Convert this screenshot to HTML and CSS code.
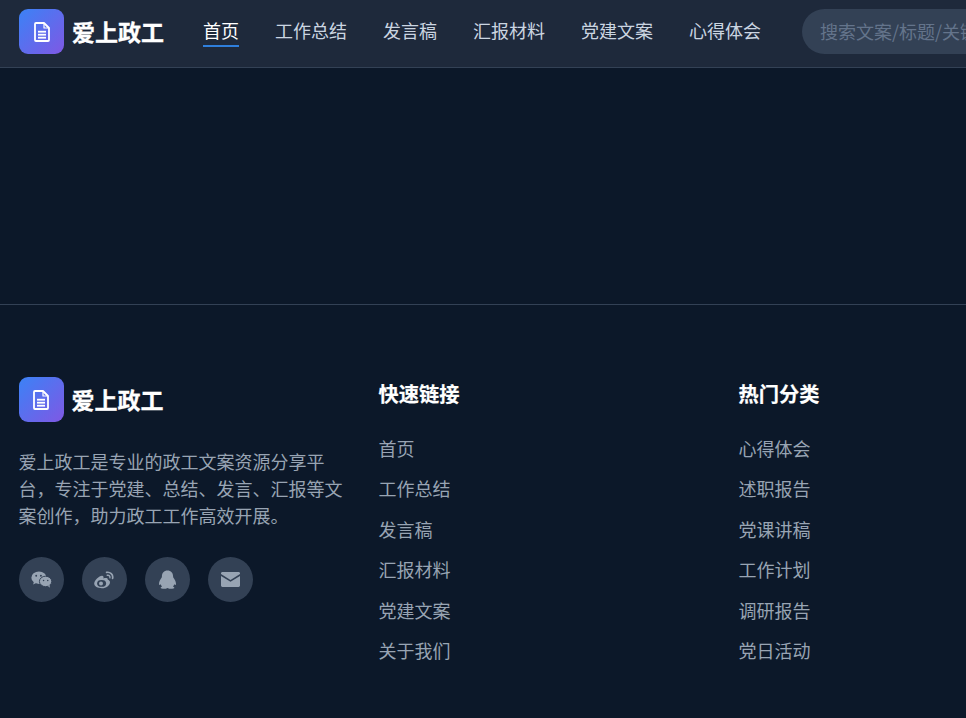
FILE: index.html
```html
<!DOCTYPE html>
<html lang="zh-CN">
<head>
    <meta charset="UTF-8">
    <meta name="viewport" content="width=device-width, initial-scale=1.0">
    <title>爱上政工</title>
    <link rel="stylesheet" href="styles.css">
</head>
<body>
    <header class="site-header">
        <a class="logo" href="#">
            <span class="logo-mark">
                <svg class="logo-icon" viewBox="0 0 16 20" fill="none" stroke="currentColor" stroke-width="1.800" stroke-linejoin="round">
                    <path d="M1 2a1 1 0 0 1 1-1h8l5 5v12a1 1 0 0 1-1 1H2a1 1 0 0 1-1-1z"></path>
                    <path d="M10 1.500V6h4.500" stroke-width="1.200"></path>
                    <line x1="4" y1="9.700" x2="12" y2="9.700"></line>
                    <line x1="4" y1="12.700" x2="12" y2="12.700"></line>
                    <line x1="4" y1="15.700" x2="12" y2="15.700"></line>
                </svg>
            </span>
            <span class="logo-text">爱上政工</span>
        </a>
        <nav class="main-nav">
            <a class="active" href="#">首页</a>
            <a href="#">工作总结</a>
            <a href="#">发言稿</a>
            <a href="#">汇报材料</a>
            <a href="#">党建文案</a>
            <a href="#">心得体会</a>
        </nav>
        <input class="search" type="text" placeholder="搜索文案/标题/关键词...">
    </header>

    <main class="content"></main>

    <footer class="site-footer">
        <div class="footer-grid">
            <div class="footer-about">
                <a class="logo" href="#">
                    <span class="logo-mark">
                        <svg class="logo-icon" viewBox="0 0 16 20" fill="none" stroke="currentColor" stroke-width="1.800" stroke-linejoin="round">
                            <path d="M1 2a1 1 0 0 1 1-1h8l5 5v12a1 1 0 0 1-1 1H2a1 1 0 0 1-1-1z"></path>
                            <path d="M10 1.500V6h4.500" stroke-width="1.200"></path>
                            <line x1="4" y1="9.700" x2="12" y2="9.700"></line>
                            <line x1="4" y1="12.700" x2="12" y2="12.700"></line>
                            <line x1="4" y1="15.700" x2="12" y2="15.700"></line>
                        </svg>
                    </span>
                    <span class="logo-text">爱上政工</span>
                </a>
                <p class="about-text">爱上政工是专业的政工文案资源分享平台，专注于党建、总结、发言、汇报等文案创作，助力政工工作高效开展。</p>
                <div class="socials">
                    <a class="social" href="#" aria-label="微信">
                        <svg width="21" height="18" viewBox="0 0 22 19" fill="currentColor">
                            <ellipse cx="8.300" cy="7" rx="8" ry="6.600"></ellipse>
                            <path d="M3 11l-.8 3.300 3.800-2z"></path>
                            <ellipse cx="15.300" cy="11" rx="6.500" ry="5.500" stroke="#334155" stroke-width="1"></ellipse>
                            <path d="M17.500 15.500l2.300 2.300-.3-3.300z"></path>
                            <g fill="#334155">
                                <circle cx="5.400" cy="5" r="1"></circle>
                                <circle cx="10.400" cy="5" r="1"></circle>
                                <circle cx="13.200" cy="10" r=".8"></circle>
                                <circle cx="17.600" cy="10" r=".8"></circle>
                            </g>
                        </svg>
                    </a>
                    <a class="social" href="#" aria-label="微博">
                        <svg width="20" height="18" viewBox="0 0 20 18" fill="none" stroke="currentColor">
                            <path d="M8 17.300c-4.300 0-7.800-1.900-7.800-4.700 0-3.200 4.900-7.900 7.800-7.900 1.700 0 1.800 1.500 1.400 2.800 2.100-.7 4.500-.7 4.500 1.200 1 .3 2.100 1.200 2.100 2.500 0 3.200-3.900 6.100-7.900 6.100z" fill="currentColor" stroke="none"></path>
                            <ellipse cx="7.600" cy="12.400" rx="4.500" ry="3.400" fill="#334155" stroke="none"></ellipse>
                            <circle cx="7" cy="12.600" r="2" fill="currentColor" stroke="none"></circle>
                            <path d="M12.600 1.400c3.500-.8 6.800 2.300 6 5.900" stroke-width="1.700" stroke-linecap="round"></path>
                            <path d="M13.300 4.300c1.700-.4 3 1 2.600 2.600" stroke-width="1.400" stroke-linecap="round"></path>
                        </svg>
                    </a>
                    <a class="social" href="#" aria-label="QQ">
                        <svg width="19" height="19" viewBox="0 0 18 19" fill="currentColor">
                            <path d="M9 .5c3.500 0 5.600 2.600 5.600 5.800 0 .6 0 1 .2 1.300 1 1.400 2.700 3.900 2.700 6.200 0 1.500-.8 1.500-1.800.4-.2.9-.6 1.600-1.200 2.200.9.400 1.400.9 1.400 1.300 0 .7-1.800 1.100-3.300 1.100-1.300 0-2.500-.3-3.600-.9-1.100.6-2.300.9-3.600.9-1.500 0-3.300-.4-3.300-1.100 0-.4.5-.9 1.400-1.300-.6-.6-1-1.300-1.200-2.200-1 1.100-1.800 1.100-1.800-.4 0-2.300 1.700-4.800 2.700-6.200.2-.3.2-.7.2-1.300C3.400 3.100 5.500.5 9 .5z"></path>
                        </svg>
                    </a>
                    <a class="social" href="#" aria-label="邮箱">
                        <svg width="19" height="15" viewBox="0 0 18 14" fill="currentColor">
                            <path d="M1.300 0h15.400C17.400 0 18 .6 18 1.300v.6L9 7.400 0 1.900v-.6C0 .6.600 0 1.300 0z"></path>
                            <path d="M0 3.700l9 5.500 9-5.500v9C18 13.400 17.400 14 16.700 14H1.300C.6 14 0 13.400 0 12.700z"></path>
                        </svg>
                    </a>
                </div>
            </div>
            <div class="footer-col">
                <h3>快速链接</h3>
                <ul>
                    <li><a href="#">首页</a></li>
                    <li><a href="#">工作总结</a></li>
                    <li><a href="#">发言稿</a></li>
                    <li><a href="#">汇报材料</a></li>
                    <li><a href="#">党建文案</a></li>
                    <li><a href="#">关于我们</a></li>
                </ul>
            </div>
            <div class="footer-col">
                <h3>热门分类</h3>
                <ul>
                    <li><a href="#">心得体会</a></li>
                    <li><a href="#">述职报告</a></li>
                    <li><a href="#">党课讲稿</a></li>
                    <li><a href="#">工作计划</a></li>
                    <li><a href="#">调研报告</a></li>
                    <li><a href="#">党日活动</a></li>
                </ul>
            </div>
        </div>
    </footer>
</body>
</html>
```

FILE: styles.css
```css
:root {
    --page-bg: #0c1829;
    --header-bg: #1e293b;
    --line-color: #334155;
    --muted: #98a4b3;
    --nav-text: #cbd5e1;
    --accent: #2f7fdc;
}
html, body {
    height: 100%;
    overflow: hidden;
}
body {
    margin: 0;
    width: 1440px;
    font-family: "Noto Sans CJK SC", "Noto Sans", sans-serif;
    background-color: var(--page-bg);
    color: #fff;
}
a {
    color: inherit;
    text-decoration: none;
}

.site-header {
    display: flex;
    align-items: flex-start;
    height: 58px;
    padding: 9px 19px 0;
    background-color: var(--header-bg);
    border-bottom: 1px solid var(--line-color);
}
.logo {
    display: flex;
    align-items: center;
    gap: 8px;
}
.logo-mark {
    display: flex;
    align-items: center;
    justify-content: center;
    width: 45px;
    height: 45px;
    border-radius: 9px;
    background: linear-gradient(135deg, #3b82f6, #7f58e4);
}
.logo-icon {
    width: 16px;
    height: 20px;
}
.logo-text {
    font-size: 23px;
    font-weight: 700;
    line-height: 1.500;
    -webkit-text-stroke: 0.3px #fff;
}
.main-nav {
    display: flex;
    gap: 36px;
    margin-left: 39px;
}
.main-nav a {
    padding: 9px 0 2px;
    font-size: 18px;
    line-height: 25px;
    color: var(--nav-text);
    border-bottom: 2px solid transparent;
}
.main-nav a.active {
    color: #fff;
    border-bottom-color: var(--accent);
}
.search {
    width: 360px;
    height: 45px;
    box-sizing: border-box;
    margin-left: 41px;
    padding: 0 18px 2px;
    border: none;
    border-radius: 22.500px;
    background-color: var(--line-color);
    font-family: inherit;
    font-size: 18px;
    color: #fff;
}
.search::placeholder {
    color: #64748b;
}

.content {
    height: 236px;
}

.site-footer {
    padding: 72px 18.500px 0;
    border-top: 1px solid var(--line-color);
}
.footer-grid {
    display: grid;
    grid-template-columns: repeat(3, 328px);
    gap: 32px;
}
.about-text {
    margin: 26px 0 0;
    font-size: 18px;
    line-height: 27px;
    color: var(--muted);
}
.socials {
    display: flex;
    gap: 18px;
    margin-top: 28px;
}
.social {
    display: flex;
    align-items: center;
    justify-content: center;
    width: 45px;
    height: 45px;
    border-radius: 50%;
    background-color: var(--line-color);
    color: var(--muted);
}
.footer-col h3 {
    margin: 2px 0 25.500px;
    font-size: 20.250px;
    font-weight: 700;
    line-height: 30px;
    -webkit-text-stroke: 0.2px #fff;
}
.footer-col ul {
    margin: 0;
    padding: 0;
    list-style: none;
}
.footer-col li {
    margin-bottom: 13.500px;
    font-size: 18px;
    line-height: 27px;
    color: var(--muted);
}
```
